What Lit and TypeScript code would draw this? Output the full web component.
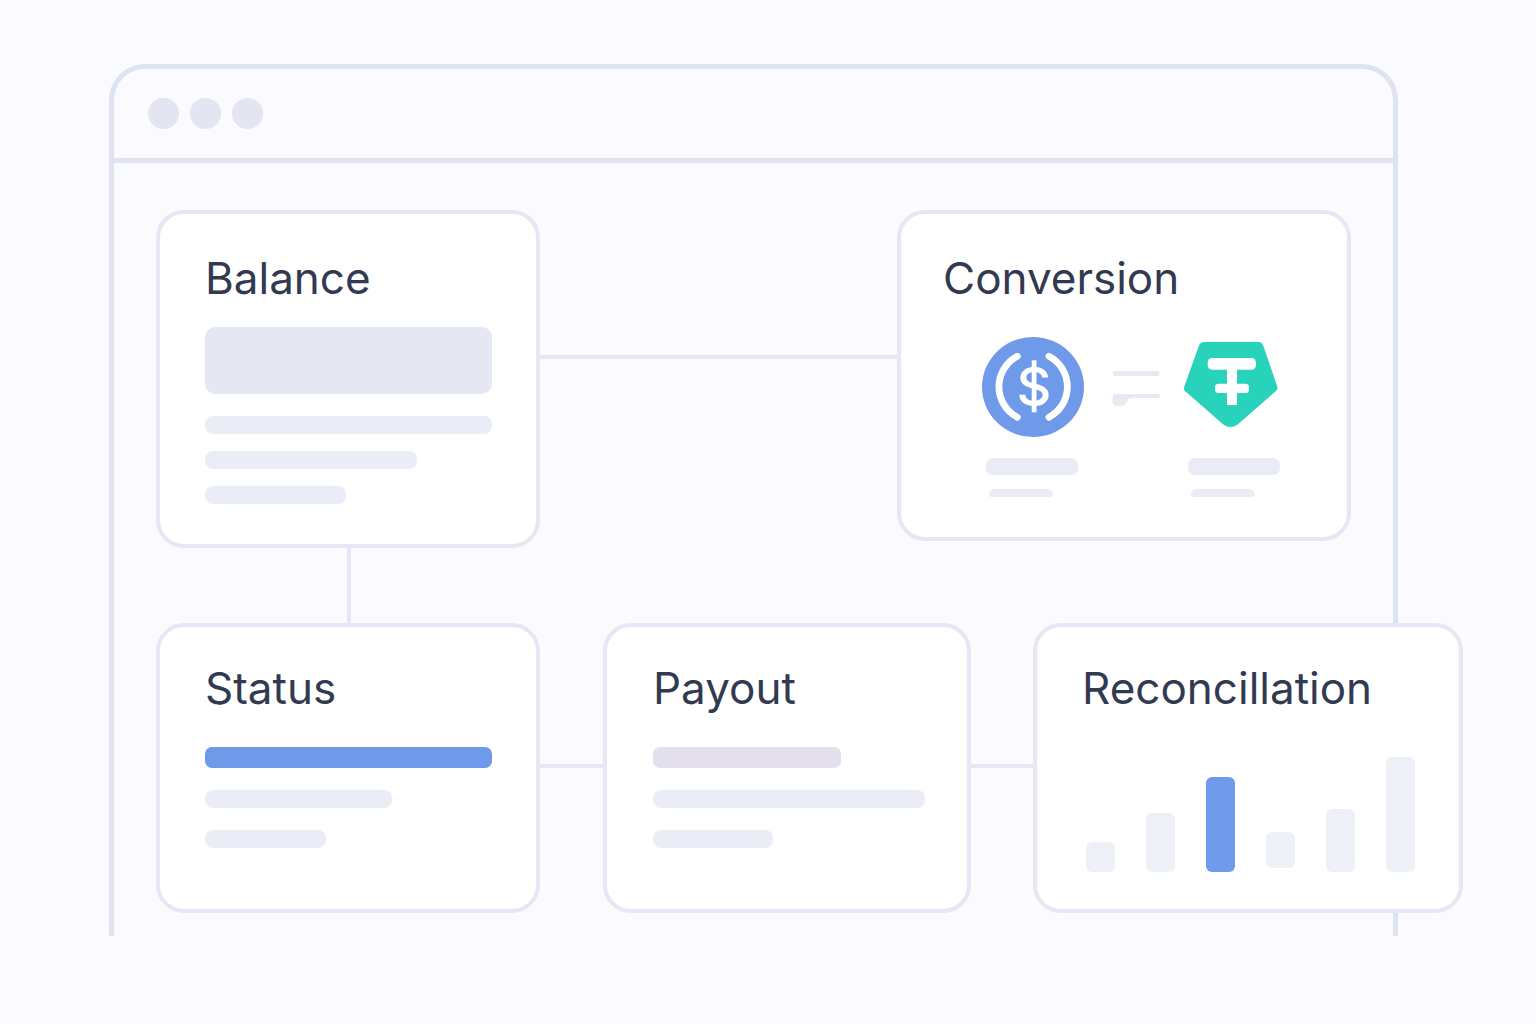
import { LitElement, html, css, svg } from "lit";
import { customElement, property } from "lit/decorators.js";
import { classMap } from "lit/directives/class-map.js";
import { styleMap } from "lit/directives/style-map.js";

type Tone = "plain" | "block" | "accent" | "lilac";

interface Line {
  width: number;
  tone: Tone;
}

interface Bar {
  height: number;
  lift?: number;
  active?: boolean;
}

const BALANCE: Line[] = [
  { width: 100, tone: "block" },
  { width: 100, tone: "plain" },
  { width: 74, tone: "plain" },
  { width: 49, tone: "plain" },
];

const STATUS: Line[] = [
  { width: 100, tone: "accent" },
  { width: 65, tone: "plain" },
  { width: 42, tone: "plain" },
];

const PAYOUT: Line[] = [
  { width: 69, tone: "lilac" },
  { width: 100, tone: "plain" },
  { width: 44, tone: "plain" },
];

const RECONCILIATION: Bar[] = [
  { height: 30 },
  { height: 59 },
  { height: 95, active: true },
  { height: 36, lift: 4 },
  { height: 63 },
  { height: 115 },
];

/** White rounded panel with a title and slotted content. */
@customElement("flow-card")
export class FlowCard extends LitElement {
  static styles = css`
    :host {
      display: flex;
      flex-direction: column;
      box-sizing: border-box;
      min-width: 0;
      border: 4px solid #e5e8f4;
      border-radius: 28px;
      background: #ffffff;
    }
    .title {
      margin: 0;
      font-family: Inter, "Liberation Sans", sans-serif;
      font-size: 44px;
      font-weight: 400;
      line-height: 52px;
      color: #323a52;
    }
  `;

  @property() heading = "";

  render() {
    return html`<h2 class="title">${this.heading}</h2><slot></slot>`;
  }
}

/** Stack of placeholder lines; widths are percentages of the card's content. */
@customElement("skeleton-lines")
export class SkeletonLines extends LitElement {
  static styles = css`
    :host {
      display: flex;
      flex-direction: column;
      gap: var(--line-gap, 22px);
    }
    .line {
      height: 18px;
      border-radius: 8px;
      background: #ebedf6;
    }
    .block {
      height: 67px;
      margin-bottom: 5px;
      border-radius: 10px;
      background: #e5e7f2;
    }
    .accent,
    .lilac {
      height: 21px;
      border-radius: 7px;
    }
    .accent {
      background: #6f99e9;
    }
    .lilac {
      background: #e4dfed;
    }
  `;

  @property({ attribute: false }) lines: Line[] = [];

  render() {
    return this.lines.map(
      (l) => html`<div
        class=${classMap({ line: true, [l.tone]: true })}
        style=${styleMap({ width: `${l.width}%` })}
      ></div>`
    );
  }
}

@customElement("bar-chart")
export class BarChart extends LitElement {
  static styles = css`
    :host {
      display: flex;
      align-items: flex-end;
      justify-content: space-between;
    }
    .bar {
      width: 29px;
      border-radius: 6px;
      background: #eef0f8;
    }
    .active {
      background: #6f99e9;
    }
  `;

  @property({ attribute: false }) bars: Bar[] = [];

  render() {
    return this.bars.map(
      (b) => html`<div
        class=${classMap({ bar: true, active: !!b.active })}
        style=${styleMap({
          height: `${b.height}px`,
          marginBottom: `${b.lift ?? 0}px`,
        })}
      ></div>`
    );
  }
}

const usdCoin = svg`
  <ellipse cx="51" cy="50" rx="51" ry="50" fill="#6f99e9" />
  <g fill="none" stroke="#ffffff" stroke-width="6.8" stroke-linecap="round">
    <path d="M35.3 19.2A34.5 34.5 0 0 0 35.3 80.2" />
    <path d="M67 19.2A34.5 34.5 0 0 1 67 80.2" />
  </g>
  <rect x="49.700" y="23.300" width="4.800" height="52" fill="#ffffff" />
  <text class="dollar" x="52" y="68.5" text-anchor="middle">$</text>`;

const tetherCoin = svg`
  <path
    fill="#29d3bb"
    d="M20 5H74.500Q78 5 79.200 8.500L93.300 49.500Q94 52 92 54L56 85.500Q46.500 94.500 37 85.500L1 54Q-0.500 52.500 0.300 49.500L15 8.500Q16.500 5 20 5Z"
  />
  <g fill="#ffffff">
    <rect x="23.700" y="21" width="48.200" height="11.700" rx="4.500" />
    <rect x="31" y="46.700" width="34" height="9.300" rx="3.500" />
    <rect x="43" y="24" width="10" height="44" rx="0.700" />
  </g>`;

const equalsMark = svg`
  <g fill="#e7e9f4">
    <rect x="5" y="34" width="46.500" height="5" rx="2" />
    <path d="M6.500 57H50Q52 57 52 59T50 61.200H22.500Q20 61.500 19.500 64Q17.500 68.700 13 68.700H9Q4.700 68.700 4.700 65V59Q4.700 57 6.500 57Z" />
  </g>`;

@customElement("app-root")
export class AppRoot extends LitElement {
  static styles = css`
    :host {
      display: block;
      box-sizing: border-box;
      min-height: 100vh;
      padding: 64px 138px 88px 109px;
      background: #fafaff;
    }
    .window {
      border: 5px solid #dde3f1;
      border-bottom: 0;
      border-radius: 36px 36px 0 0;
    }
    .titlebar {
      display: flex;
      gap: 11px;
      padding: 29px 34px;
      border-bottom: 5px solid #dde3f1;
    }
    .dot {
      width: 31px;
      height: 31px;
      border-radius: 50%;
      background: #e3e5f1;
    }
    .canvas {
      padding: 47px 42px 23px;
    }
    .row {
      display: grid;
    }
    .top {
      grid-template-columns: 384fr 357fr 454fr;
      align-items: start;
    }
    .bottom {
      grid-template-columns: 384fr 63fr 368fr 62fr 430fr;
      margin-right: -112px;
    }
    .link {
      height: 4px;
      background: #e5e8f4;
    }
    .top .link {
      margin-top: 145px;
    }
    .bottom .link {
      margin-top: 141px;
    }
    .drop {
      width: 4px;
      height: 75px;
      margin-left: 16%;
      background: #e5e8f4;
    }
    .balance {
      --line-gap: 17px;
      gap: 23px;
      padding: 38px 44px 40px 45px;
    }
    .conversion {
      gap: 33px;
      padding: 38px 28px 40px 42px;
    }
    .status {
      gap: 33px;
      padding: 35px 44px 37px 45px;
    }
    .payout {
      gap: 33px;
      padding: 35px 42px 37px 46px;
    }
    .reconciliation {
      gap: 43px;
      padding: 35px 44px 37px 45px;
    }
    .chart {
      margin-left: 4px;
    }
    .assets {
      display: flex;
      justify-content: center;
      gap: 24px;
    }
    .asset {
      display: flex;
      flex-direction: column;
      padding-left: 4px;
    }
    .icon {
      display: block;
      margin-left: -4px;
    }
    .equals {
      display: block;
    }
    .dollar {
      font-family: Inter, "Liberation Sans", sans-serif;
      font-size: 54px;
      font-weight: 500;
      fill: #ffffff;
    }
    .name {
      width: 92px;
      height: 17px;
      margin-top: 21px;
      border-radius: 7px;
      background: #e9ebf5;
    }
    .note {
      width: 64px;
      height: 8px;
      margin: 14px 0 0 3px;
      border-radius: 7px 7px 3px 3px;
      background: #eaedf6;
    }
  `;

  render() {
    return html`
      <main class="window">
        <div class="titlebar">
          <span class="dot"></span><span class="dot"></span><span class="dot"></span>
        </div>
        <div class="canvas">
          <div class="row top">
            <flow-card class="balance" heading="Balance">
              <skeleton-lines .lines=${BALANCE}></skeleton-lines>
            </flow-card>
            <div class="link"></div>
            <flow-card class="conversion" heading="Conversion">
              <div class="assets">
                <div class="asset">
                  <svg class="icon" width="102" height="100" viewBox="0 0 102 100">${usdCoin}</svg>
                  <div class="name"></div>
                  <div class="note"></div>
                </div>
                <svg class="equals" width="52" height="100" viewBox="0 0 52 100">${equalsMark}</svg>
                <div class="asset">
                  <svg class="icon" width="94" height="100" viewBox="0 0 94 100">${tetherCoin}</svg>
                  <div class="name"></div>
                  <div class="note"></div>
                </div>
              </div>
            </flow-card>
          </div>
          <div class="drop"></div>
          <div class="row bottom">
            <flow-card class="status" heading="Status">
              <skeleton-lines .lines=${STATUS}></skeleton-lines>
            </flow-card>
            <div class="link"></div>
            <flow-card class="payout" heading="Payout">
              <skeleton-lines .lines=${PAYOUT}></skeleton-lines>
            </flow-card>
            <div class="link"></div>
            <flow-card class="reconciliation" heading="Reconcillation">
              <bar-chart class="chart" .bars=${RECONCILIATION}></bar-chart>
            </flow-card>
          </div>
        </div>
      </main>
    `;
  }
}
